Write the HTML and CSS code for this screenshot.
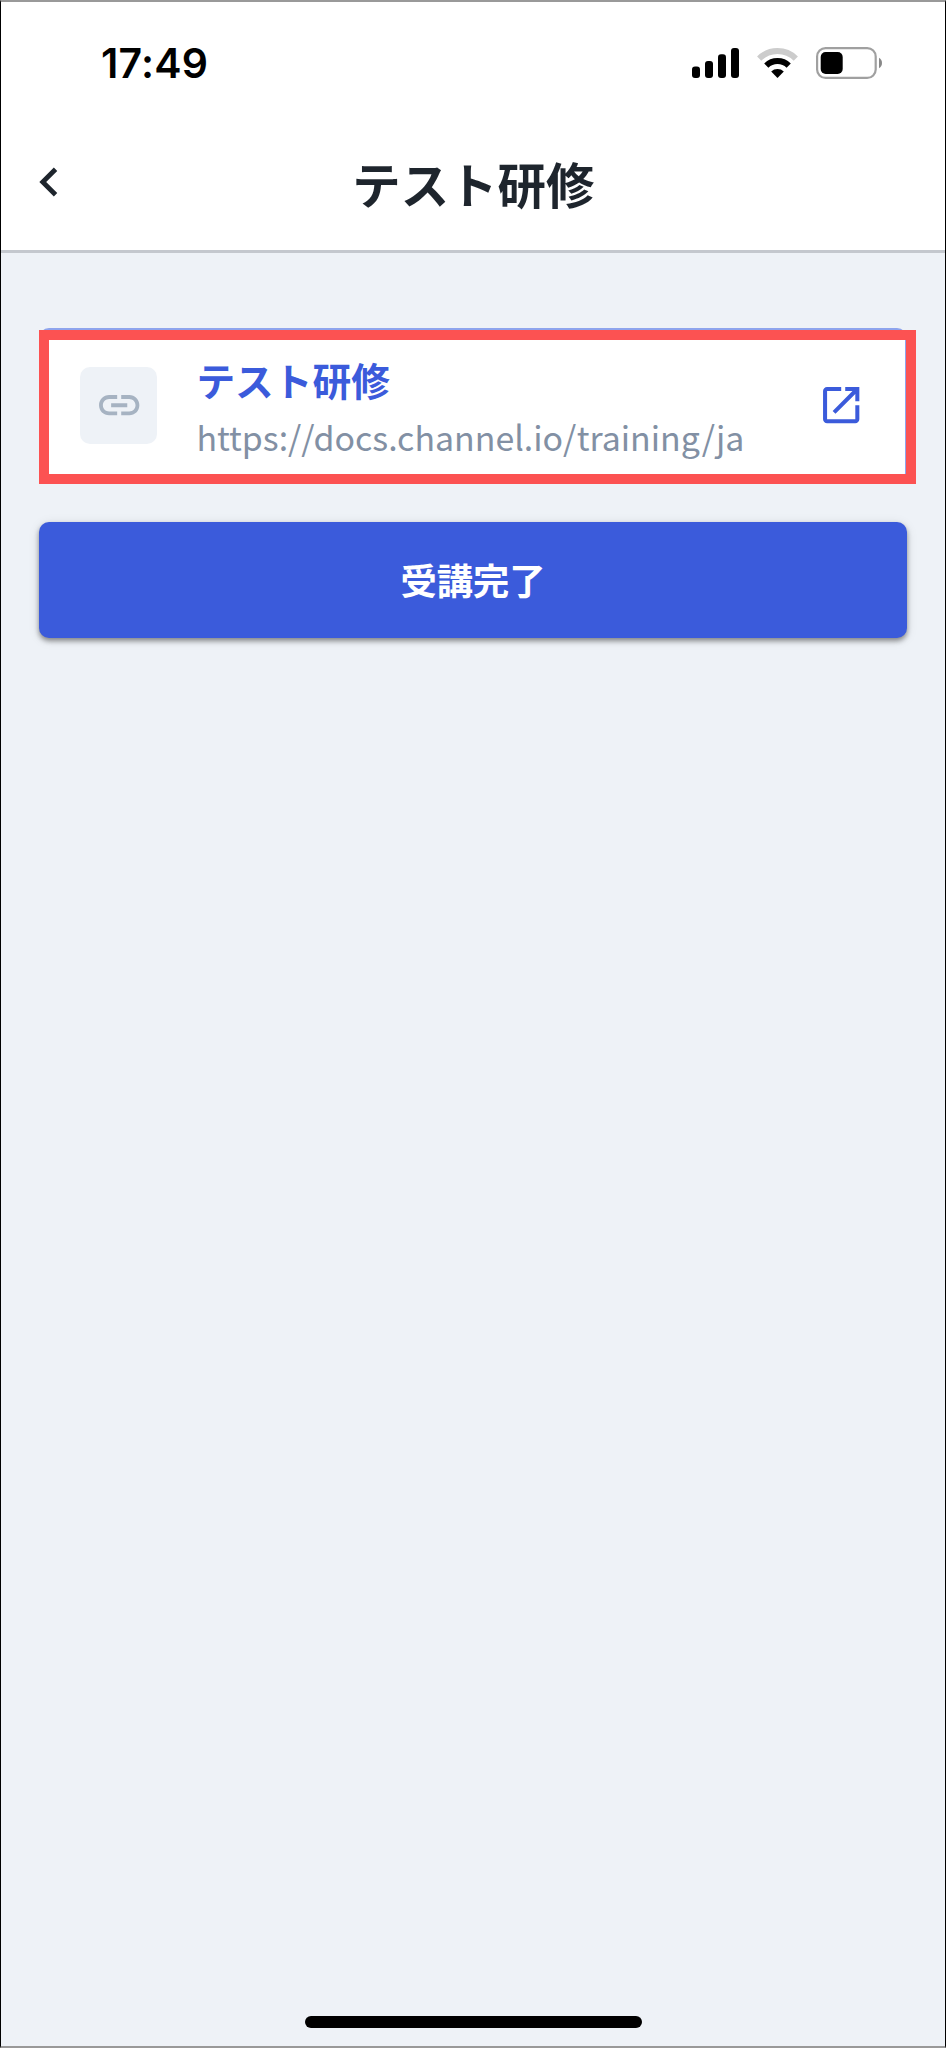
FILE: index.html
```html
<!DOCTYPE html>
<html lang="ja">
<head>
<meta charset="utf-8">
<title>テスト研修</title>
<link rel="stylesheet" href="styles.css">
</head>
<body>
<div class="screen">
  <header class="header">
    <div class="status-bar">
      <span class="time">17:49</span>
      <div class="status-icons">
        <svg class="signal" width="47" height="30" viewBox="0 0 47 30">
          <rect x="0" y="18.5" width="8" height="11.5" rx="3"/>
          <rect x="13" y="13" width="8" height="17" rx="3"/>
          <rect x="26" y="6.3" width="8" height="23.7" rx="3"/>
          <rect x="39" y="0" width="8" height="30" rx="3"/>
        </svg>
        <svg class="wifi" width="41" height="30" viewBox="0 0 41 30">
          <path class="wifi-weak" d="M2.2 10.6A26 26 0 0 1 38.8 10.6"/>
          <path class="wifi-mid" d="M9.3 17.6A16 16 0 0 1 31.7 17.6"/>
          <path class="wifi-dot" d="M14.2 23.6A9.2 9.2 0 0 1 26.8 23.6L20.5 30Z"/>
        </svg>
        <svg class="battery" width="66" height="32" viewBox="0 0 66 32">
          <rect class="battery-case" x="1.1" y="1.1" width="58.6" height="29.8" rx="8.5"/>
          <rect x="4.7" y="5" width="22" height="22" rx="5"/>
          <path class="battery-cap" d="M63 10.8Q66 12.5 66 16T63 21.2Z"/>
        </svg>
      </div>
    </div>
    <div class="title-bar">
      <svg class="back" viewBox="0 0 24 24"><path d="M15.41 7.41 14 6l-6 6 6 6 1.41-1.41L10.83 12z"/></svg>
      <h1 class="title">テスト研修</h1>
    </div>
  </header>
  <main class="content">
    <div class="card">
      <div class="link-tile">
        <svg class="icon" viewBox="0 0 24 24"><path d="M3.9 12c0-1.71 1.39-3.1 3.1-3.1h4V7H7c-2.76 0-5 2.24-5 5s2.24 5 5 5h4v-1.9H7c-1.71 0-3.1-1.39-3.1-3.1zM8 13h8v-2H8v2zm9-6h-4v1.9h4c1.71 0 3.1 1.39 3.1 3.1s-1.39 3.1-3.1 3.1h-4V17h4c2.76 0 5-2.24 5-5s-2.24-5-5-5z"/></svg>
      </div>
      <div class="link-text">
        <div class="link-title">テスト研修</div>
        <div class="link-url">https://docs.channel.io/training/ja</div>
      </div>
      <svg class="icon open" viewBox="0 0 24 24"><path d="M19 19H5V5h7V3H5c-1.11 0-2 .9-2 2v14c0 1.1.89 2 2 2h14c1.1 0 2-.9 2-2v-7h-2v7zM14 3v2h3.59l-9.83 9.83 1.41 1.41L19 6.41V10h2V3h-7z"/></svg>
      <div class="highlight"></div>
    </div>
    <button class="complete" type="button">受講完了</button>
  </main>
  <div class="home-indicator"></div>
</div>
</body>
</html>
```
FILE: styles.css
```css
* { box-sizing: border-box; }

body {
  margin: 0;
  font-family: "Noto Sans CJK JP", sans-serif;
}

.screen {
  display: flex;
  flex-direction: column;
  align-items: stretch;
  width: 946px;
  height: 2048px;
  border: solid;
  border-width: 2px 1px;
  border-color: #999 #000;
  background: #eef2f7;
}

.header {
  height: 251px;
  border-bottom: 3px solid #c4c8ce;
  background: #fff;
}

.status-bar {
  display: flex;
  justify-content: space-between;
  height: 122px;
  padding: 45px 63px 0 100px;
}

.time {
  height: 36px;
  margin-top: -2px;
  font: 600 41px/36px Inter, sans-serif;
  letter-spacing: 0.2px;
  color: #000;
}

.status-icons {
  display: flex;
  align-items: flex-start;
}

.signal { margin-top: 1px; }

.wifi {
  margin: 1px 18px 0;
  fill: none;
}

.wifi-weak { stroke: #ccc; stroke-width: 6; }
.wifi-mid { stroke: #000; stroke-width: 6; }
.wifi-dot { fill: #000; }

.battery-case {
  fill: none;
  stroke: #a0a0a0;
  stroke-width: 2.2;
}

.battery-cap { fill: #888; }

.title-bar {
  display: grid;
  grid-template-columns: 58px 1fr 58px;
  padding: 29px 20px 0 18.6px;
}

.back {
  width: 58px;
  height: 58px;
  fill: #1e252d;
}

.title {
  margin: 0 0 0 2px;
  font-size: 48.4px;
  font-weight: 700;
  line-height: 60px;
  text-align: center;
  color: #1e252d;
}

.content {
  flex: 1;
  padding: 75px 38px 0;
}

.card {
  position: relative;
  display: flex;
  align-items: center;
  height: 155px;
  padding: 0 39.5px 0 39px;
  border: 2px solid #8ea4ed;
  border-radius: 10px;
  background: #fff;
}

.link-tile {
  display: flex;
  align-items: center;
  justify-content: center;
  width: 77.4px;
  height: 77.4px;
  border-radius: 10px;
  background: #eef2f7;
}

.icon {
  width: 48.4px;
  height: 48.4px;
  fill: #a6b3c2;
}

.icon.open { fill: #3b5bdb; }

.link-text {
  flex: 1;
  padding: 4px 0 0 39px;
}

.link-title {
  font-size: 38.7px;
  font-weight: 700;
  line-height: 58px;
  color: #3b5bdb;
}

.link-url {
  font-size: 33.9px;
  line-height: 58px;
  color: #8290a4;
}

.highlight {
  position: absolute;
  top: 0;
  left: -2px;
  width: 877px;
  height: 154px;
  border: 10px solid #fc5252;
}

.complete {
  display: block;
  width: 868px;
  height: 116px;
  margin-top: 39px;
  padding: 0 0 2px;
  border: 0;
  border-radius: 10px;
  background: #3b5bdb;
  box-shadow: 0 2px 12px rgba(0, 0, 0, .1), 0 3px 5px rgba(0, 0, 0, .4);
  font: 700 36.3px/114px "Noto Sans CJK JP", sans-serif;
  color: #fff;
}

.home-indicator {
  align-self: center;
  width: 337px;
  height: 12px;
  margin-bottom: 18px;
  border-radius: 6px;
  background: #000;
}
```
